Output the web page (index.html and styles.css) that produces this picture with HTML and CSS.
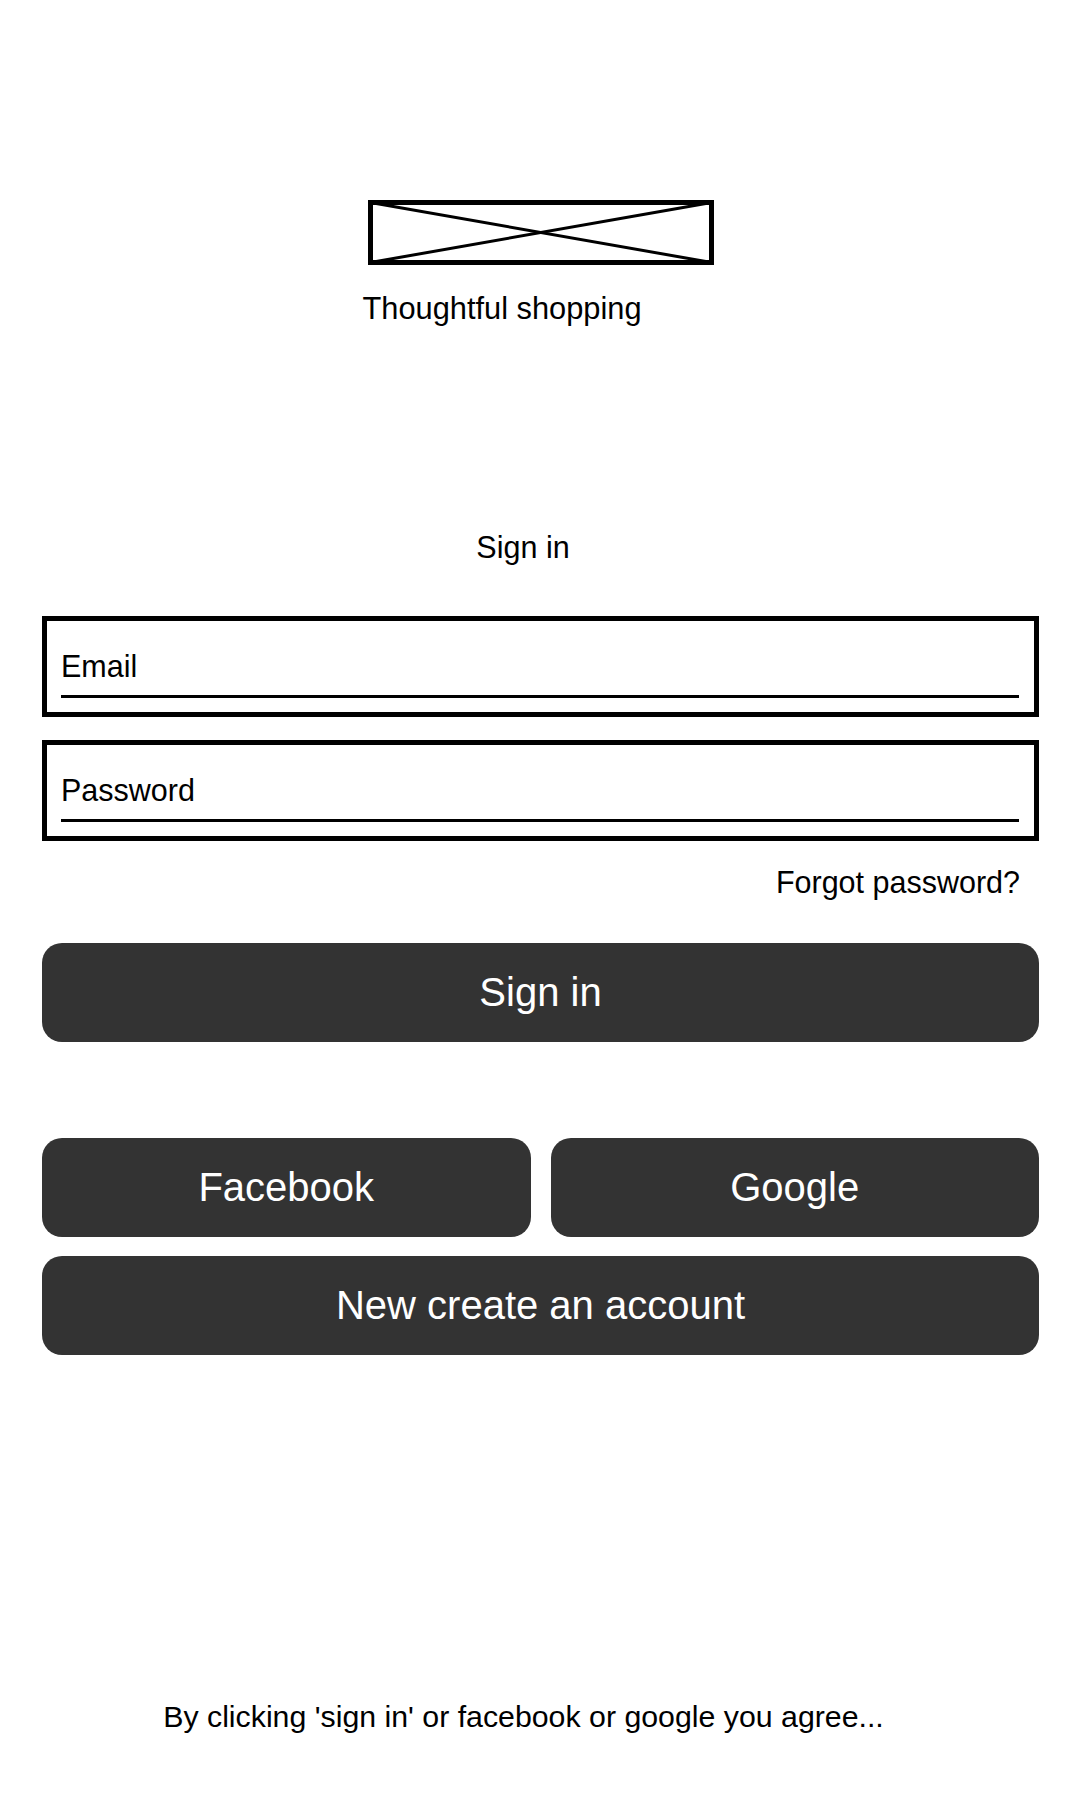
FILE: index.html
```html
<!DOCTYPE html>
<html lang="en">

<head>
    <meta charset="UTF-8">
    <meta name="viewport" content="width=device-width, initial-scale=1.0">
    <title>Sign in</title>
    <link rel="stylesheet" href="styles.css">
</head>

<body>
    <div class="page">
        <div class="brand">
            <!-- logo placeholder -->
            <svg class="logo" width="346" height="65" viewBox="0 0 346 65">
                <rect x="2.5" y="2.5" width="341" height="60" fill="none" stroke="#000" stroke-width="5" />
                <line x1="2.5" y1="2.5" x2="343.5" y2="62.5" stroke="#000" stroke-width="3" />
                <line x1="2.5" y1="62.5" x2="343.5" y2="2.5" stroke="#000" stroke-width="3" />
            </svg>
            <p class="tagline">Thoughtful shopping</p>
        </div>

        <h2 class="title">Sign in</h2>

        <form id="login-form">
            <div class="field">
                <input type="email" id="email" name="email" placeholder="Email">
            </div>
            <div class="field">
                <input type="password" id="password" name="password" placeholder="Password">
            </div>
            <div class="forgot">
                <a href="#">Forgot password?</a>
            </div>
            <button type="button" class="btn btn-signin">Sign in</button>
        </form>

        <div class="social">
            <button type="button" class="btn">Facebook</button>
            <button type="button" class="btn">Google</button>
        </div>
        <button type="button" class="btn btn-create">New create an account</button>

        <p class="terms">By clicking 'sign in' or facebook or google you agree...</p>
    </div>
</body>

</html>
```

FILE: styles.css
```css
body {
    margin: 0;
    background: #fff;
    color: #000;
    font-family: "Liberation Sans", Arial, sans-serif;
}

.page {
    width: 1080px;
    box-sizing: border-box;
    padding: 200px 41px 0 42px;
}

.brand {
    width: 346px;
    margin: 0 auto;
}

.logo {
    display: block;
}

.tagline {
    margin: 26px 0 0 -5px;
    font-size: 30.8px;
    line-height: 36px;
    white-space: nowrap;
}

/* titles sit a little left of centre in the mockup */
.title {
    margin: 202px -41px 0 -42px;
    padding-right: 34px;
    text-align: center;
    font-size: 30.5px;
    line-height: 36px;
    font-weight: normal;
}

#login-form {
    margin-top: 51px;
}

.field {
    border: 5px solid #000;
    padding: 17px 15px 14px 14px;
    margin-bottom: 23px;
}

.field input {
    display: block;
    width: 100%;
    height: 57px;
    padding: 0;
    margin: 0;
    border: none;
    border-bottom: 3px solid #000;
    outline: none;
    background: transparent;
    font-family: inherit;
    font-size: 30.5px;
    color: #000;
}

.field input::placeholder {
    color: #000;
    opacity: 1;
}

.forgot {
    margin-top: 0;
    padding-right: 19px;
    text-align: right;
    font-size: 30.5px;
    line-height: 36px;
}

.forgot a {
    color: #000;
    text-decoration: none;
}

.btn {
    display: block;
    width: 100%;
    height: 99px;
    padding: 0;
    border: none;
    border-radius: 20px;
    background: #333;
    color: #fff;
    font-family: inherit;
    font-size: 40px;
    cursor: pointer;
}

.btn-signin {
    margin-top: 43px;
}

.social {
    display: flex;
    gap: 20px;
    margin-top: 96px;
}

.btn-create {
    margin-top: 19px;
}

.terms {
    margin: 344px -41px 0 -42px;
    padding-right: 33px;
    text-align: center;
    font-size: 30.3px;
    line-height: 36px;
}
```
